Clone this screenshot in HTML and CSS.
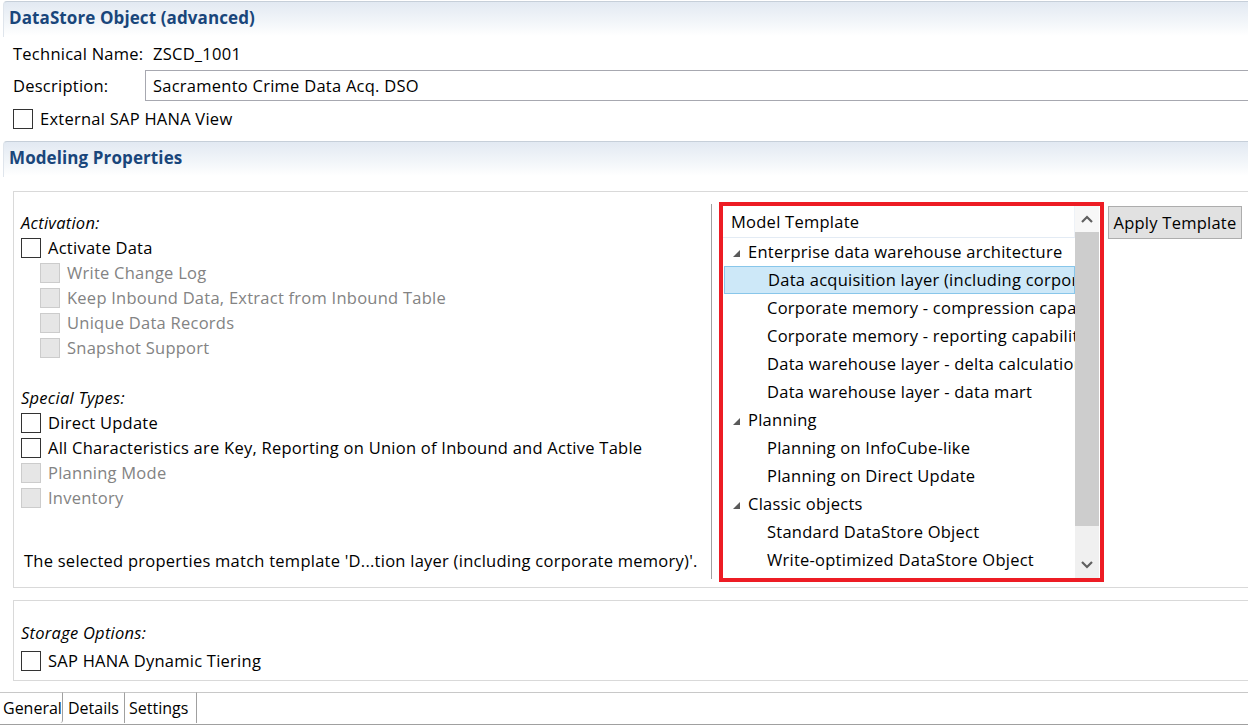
FILE: index.html
```html
<!DOCTYPE html>
<html>
<head>
<meta charset="utf-8">
<link rel="stylesheet" href="styles.css">
</head>
<body>
<div class="page">
  <div class="section-head"><span class="section-title">DataStore Object (advanced)</span></div>
  <div class="general">
    <div class="gen-row"><span class="gen-label">Technical Name:</span><span class="gen-value">ZSCD_1001</span></div>
    <div class="gen-row"><span class="gen-label">Description:</span><div class="text-input">Sacramento Crime Data Acq. DSO</div></div>
    <div class="gen-row check-row-top"><span class="check"><span class="box"></span><span>External SAP HANA View</span></span></div>
  </div>
  <div class="section-head"><span class="section-title">Modeling Properties</span></div>

  <div class="group group-model">
    <div class="left-col">
      <div class="caption">Activation:</div>
      <div class="check"><span class="box"></span><span>Activate Data</span></div>
      <div class="check sub disabled"><span class="box"></span><span>Write Change Log</span></div>
      <div class="check sub disabled"><span class="box"></span><span>Keep Inbound Data, Extract from Inbound Table</span></div>
      <div class="check sub disabled"><span class="box"></span><span>Unique Data Records</span></div>
      <div class="check sub disabled"><span class="box"></span><span>Snapshot Support</span></div>
      <div class="caption spaced">Special Types:</div>
      <div class="check"><span class="box"></span><span>Direct Update</span></div>
      <div class="check"><span class="box"></span><span>All Characteristics are Key, Reporting on Union of Inbound and Active Table</span></div>
      <div class="check disabled"><span class="box"></span><span>Planning Mode</span></div>
      <div class="check disabled"><span class="box"></span><span>Inventory</span></div>
      <div class="match-msg">The selected properties match template 'D...tion layer (including corporate memory)'.</div>
    </div>
    <div class="vsep"></div>
    <div class="red-frame">
      <div class="tree">
        <div class="tree-list">
          <div class="tree-head">Model Template</div>
          <div class="node lvl0"><svg class="tri" width="7" height="7" viewBox="0 0 7 7"><polygon points="7,0 7,7 0,7"/></svg>Enterprise data warehouse architecture</div>
          <div class="node lvl1 selected">Data acquisition layer (including corporate memory)</div>
          <div class="node lvl1">Corporate memory - compression capabilities</div>
          <div class="node lvl1">Corporate memory - reporting capabilities</div>
          <div class="node lvl1">Data warehouse layer - delta calculation</div>
          <div class="node lvl1">Data warehouse layer - data mart</div>
          <div class="node lvl0"><svg class="tri" width="7" height="7" viewBox="0 0 7 7"><polygon points="7,0 7,7 0,7"/></svg>Planning</div>
          <div class="node lvl1">Planning on InfoCube-like</div>
          <div class="node lvl1">Planning on Direct Update</div>
          <div class="node lvl0"><svg class="tri" width="7" height="7" viewBox="0 0 7 7"><polygon points="7,0 7,7 0,7"/></svg>Classic objects</div>
          <div class="node lvl1">Standard DataStore Object</div>
          <div class="node lvl1">Write-optimized DataStore Object</div>
        </div>
        <div class="vscroll">
          <div class="arrow up"><svg width="12" height="8" viewBox="0 0 12 8"><polyline points="1,7 6,2 11,7" /></svg></div>
          <div class="thumb"></div>
          <div class="track"></div>
          <div class="arrow down"><svg width="12" height="8" viewBox="0 0 12 8"><polyline points="1,1 6,6 11,1" /></svg></div>
        </div>
      </div>
    </div>
    <button class="btn">Apply Template</button>
  </div>

  <div class="group group-storage">
    <div class="caption">Storage Options:</div>
    <div class="check"><span class="box"></span><span>SAP HANA Dynamic Tiering</span></div>
  </div>

  <div class="tabs">
    <div class="tab active">General</div>
    <div class="tab">Details</div>
    <div class="tab">Settings</div>
    <div class="tab-fill"></div>
  </div>
</div>
</body>
</html>
```

FILE: styles.css
```css
html, body {
  margin: 0;
  padding: 0;
  background: #ffffff;
}
body {
  font-family: "Open Sans", "Noto Sans", sans-serif;
  font-size: 16.5px;
  letter-spacing: 0.25px;
  color: #000000;
  width: 1248px;
  height: 726px;
  overflow: hidden;
}
.page {
  display: flex;
  flex-direction: column;
  width: 1248px;
}

/* section headers */
.section-head {
  height: 35px;
  margin-left: 3px;
  border-top: 1px solid #c6cfd9;
  border-left: 1px solid #dfe5ec;
  border-top-left-radius: 4px;
  background: linear-gradient(#e2e9f2 0px, #f4f7fa 22px, #ffffff 34px);
  display: flex;
  align-items: center;
  padding-left: 5px;
}
.section-head:first-child {
  margin-top: 1px;
}
.section-title {
  font-weight: bold;
  font-size: 17px;
  letter-spacing: 0.1px;
  color: #19467b;
  position: relative;
  top: -2px;
}

/* general block */
.general {
  display: grid;
  grid-template-rows: 33px 31px 40px;
}
.gen-row {
  display: flex;
  align-items: center;
  padding-left: 13px;
}
.gen-label {
  width: 132px;
  flex: 0 0 132px;
}
.gen-value {
  margin-left: 8px;
}
.text-input {
  flex: 1;
  height: 29px;
  border: 1px solid #a7a8b0;
  border-right: none;
  display: flex;
  align-items: center;
  padding-left: 7px;
}
.check-row-top {
  align-items: flex-start;
  padding-top: 5px;
}

/* checkbox */
.check {
  display: flex;
  align-items: center;
  height: 25px;
  white-space: nowrap;
}
.box {
  width: 18px;
  height: 18px;
  border: 1px solid #333333;
  background: #ffffff;
  margin-right: 7px;
  flex: 0 0 18px;
}
.check.disabled {
  color: #838383;
}
.check.disabled .box {
  background: #e6e6e6;
  border-color: #cccccc;
}
.check.sub {
  padding-left: 19px;
}

.caption {
  font-style: italic;
  height: 25px;
  line-height: 25px;
}
.caption.spaced {
  margin-top: 25px;
}

/* group boxes */
.group {
  margin-left: 13px;
  border: 1px solid #d9d9d9;
  border-right: none;
}
.group-model {
  margin-top: 14px;
  height: 395px;
  display: flex;
  align-items: flex-start;
}
.left-col {
  flex: 0 0 690px;
  padding-left: 7px;
  padding-top: 18px;
  display: flex;
  flex-direction: column;
}
.match-msg {
  margin-top: 38px;
  padding-left: 3px;
  height: 25px;
  line-height: 25px;
  white-space: nowrap;
}
.vsep {
  flex: 0 0 1px;
  width: 1px;
  height: 375px;
  margin-top: 12px;
  background: #a0a0a0;
}
.red-frame {
  margin-left: 7px;
  margin-top: 10px;
  width: 377px;
  height: 372px;
  border: 4px solid #ed1c24;
  flex: 0 0 auto;
}
.tree {
  display: flex;
  height: 372px;
  background: #ffffff;
}
.tree-list {
  flex: 0 0 352px;
  width: 352px;
  overflow: hidden;
}
.tree-head {
  height: 31px;
  line-height: 32px;
  padding-left: 8px;
  border-bottom: 1px solid #e3ebf4;
  border-right: 1px solid #eef2f7;
  white-space: nowrap;
}
.node {
  height: 28px;
  line-height: 28px;
  white-space: nowrap;
  overflow: hidden;
  display: flex;
  align-items: center;
  box-sizing: border-box;
}
.node.lvl0 {
  padding-left: 10px;
}
.node.lvl0 .tri {
  margin-right: 8px;
  fill: #5a5a5a;
  flex: 0 0 7px;
  position: relative;
  top: 1px;
}
.node.lvl1 {
  padding-left: 44px;
}
.node.selected {
  background: #cde8f8;
  border: 1px solid #88c6ea;
  padding-left: 43px;
  margin-left: 1px;
}

.vscroll {
  flex: 0 0 24px;
  width: 24px;
  display: flex;
  flex-direction: column;
  background: #f0f0f0;
}
.arrow {
  height: 26px;
  display: flex;
  align-items: center;
  justify-content: center;
}
.arrow.up {
  background: #f7f7f7;
}
.arrow svg polyline {
  fill: none;
  stroke: #606060;
  stroke-width: 2.2;
}
.thumb {
  height: 294px;
  background: #cdcdcd;
}
.track {
  flex: 1;
}
.arrow.down {
  height: 26px;
}

.btn {
  margin-left: 4px;
  margin-top: 14px;
  width: 134px;
  height: 33px;
  background: #e1e1e1;
  border: 1px solid #adadad;
  font-family: inherit;
  font-size: 16.5px;
  letter-spacing: 0.25px;
  color: #000000;
  padding: 0;
  flex: 0 0 auto;
}

.group-storage {
  margin-top: 12px;
  padding-left: 7px;
  padding-top: 19px;
  box-sizing: border-box;
  height: 81px;
}
.group-storage .check {
  margin-top: 3px;
}

/* tabs */
.tabs {
  margin-top: 11px;
  display: flex;
  height: 32px;
  border-bottom: 1px solid #a0a0a0;
  letter-spacing: 0;
  font-size: 16px;
}
.tab {
  height: 31px;
  line-height: 30px;
  border-top: 1px solid #c8c8c8;
  border-right: 1px solid #a0a0a0;
  padding: 0 3px 0 4px;
  white-space: nowrap;
  box-sizing: border-box;
}
.tab.active {
  padding-left: 3px;
  width: 63px;
  border-bottom-right-radius: 3px;
}
.tab:nth-child(2) {
  width: 62px;
  padding-left: 5px;
}
.tab:nth-child(3) {
  width: 72px;
}
.tab-fill {
  flex: 1;
  border-top: 1px solid #c8c8c8;
}
```
